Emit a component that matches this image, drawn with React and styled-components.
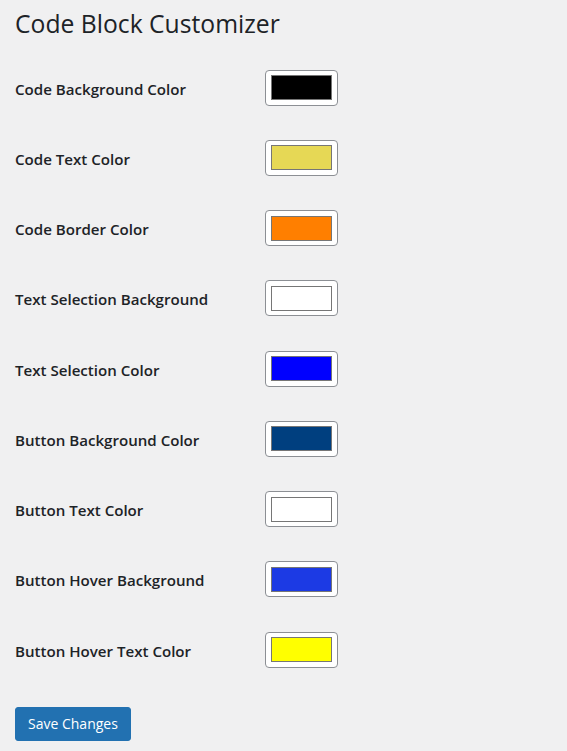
import React from "react";
import styled, { createGlobalStyle } from "styled-components";

const Global = createGlobalStyle`
  html, body { margin: 0; padding: 0; background: #f0f0f1; }
  body { font-family: "Open Sans", "Noto Sans", sans-serif; color: #1d2327; }
`;

const Wrap = styled.div`
  padding: 9px 15px 0 15px;
  display: flex;
  flex-direction: column;
`;

const Title = styled.h1`
  margin: 0;
  font-size: 24.7px;
  font-weight: 400;
  line-height: 30px;
  color: #1d2327;
`;

const Rows = styled.div`
  margin-top: 13.5px;
  display: flex;
  flex-direction: column;
`;

const Row = styled.div`
  height: 70.25px;
  display: grid;
  grid-template-columns: 250px auto;
  align-items: center;
`;

const Label = styled.label`
  font-size: 15.1px;
  font-weight: 600;
  padding-top: 2px;
  color: #1d2327;
`;

const ColorBox = styled.div`
  width: 71px;
  height: 34px;
  border: 1px solid #8c8f94;
  border-radius: 4px;
  background: #fff;
  display: flex;
  align-items: center;
  justify-content: center;
`;

const Swatch = styled.div`
  width: 59px;
  height: 23px;
  border: 1px solid #767676;
  background: ${(p) => p.$color};
`;

const Button = styled.button`
  margin-top: 22px;
  align-self: flex-start;
  height: 34px;
  padding: 0 12px;
  background: #2271b1;
  border: 1px solid #2271b1;
  border-radius: 3px;
  color: #fff;
  font-family: inherit;
  font-size: 14px;
  line-height: 32px;
  cursor: pointer;
`;

const fields = [
  ["Code Background Color", "#000000"],
  ["Code Text Color", "#e6d855"],
  ["Code Border Color", "#ff7f00"],
  ["Text Selection Background", "#ffffff"],
  ["Text Selection Color", "#0000ff"],
  ["Button Background Color", "#003f7f"],
  ["Button Text Color", "#ffffff"],
  ["Button Hover Background", "#1c3ae4"],
  ["Button Hover Text Color", "#ffff00"],
];

export default function App() {
  return (
    <>
      <Global />
      <Wrap>
        <Title>Code Block Customizer</Title>
        <Rows>
          {fields.map(([label, color]) => (
            <Row key={label}>
              <Label>{label}</Label>
              <ColorBox>
                <Swatch $color={color} />
              </ColorBox>
            </Row>
          ))}
        </Rows>
        <Button>Save Changes</Button>
      </Wrap>
    </>
  );
}
